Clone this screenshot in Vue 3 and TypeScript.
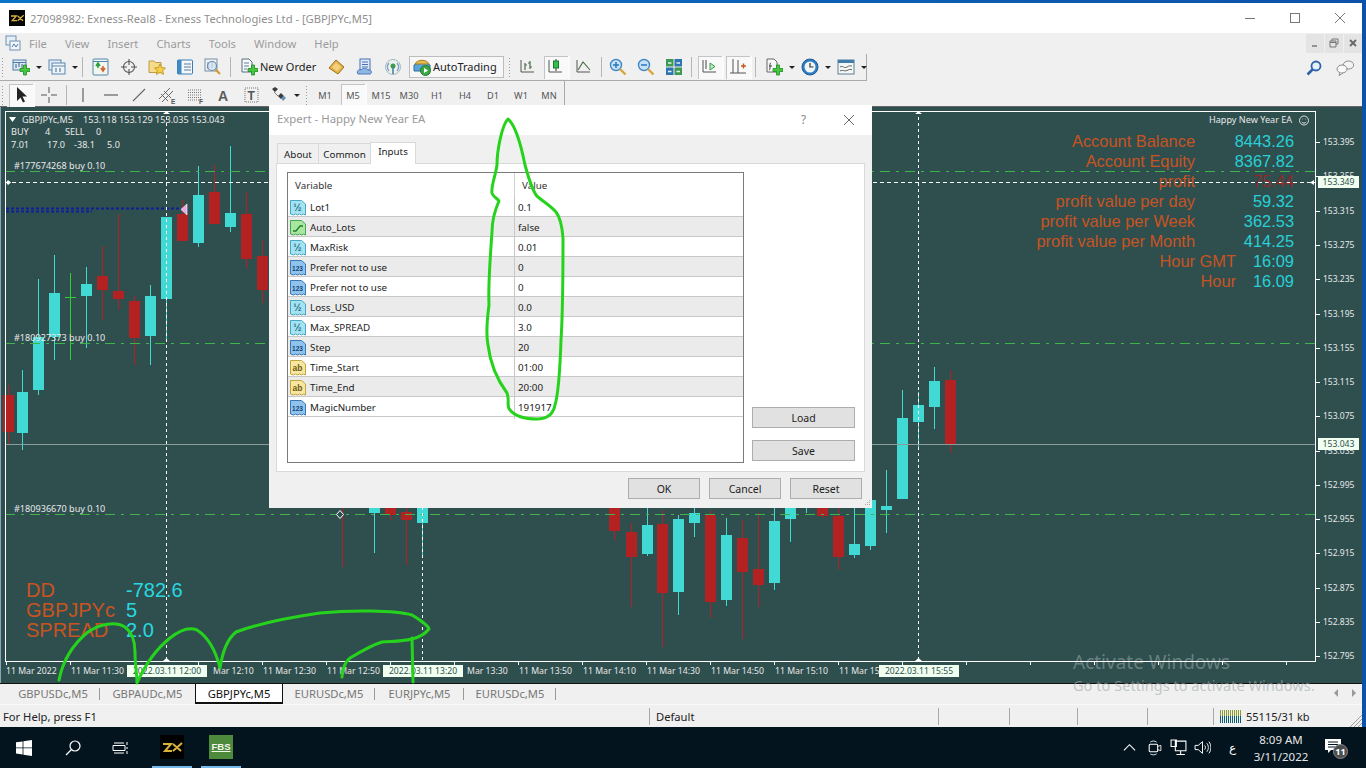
<script setup lang="ts">
const plus = (x = 8, y = 7) =>
  `<path transform="translate(${x} ${y})" d="M3.500 0h3v3.500H10v3H6.500V10h-3V6.500H0v-3h3.500z" fill="#46c83c" stroke="#1e8a28" stroke-width=".8"/>`
const arrowTick = '<path d="M2 2v12h13" fill="none" stroke="#555" stroke-width="1"/>'
const icons: Record<string, string> = {
  newChart: `<rect x="1" y="2" width="13" height="10" fill="#dde9f4" stroke="#4e7aa6"/><path d="M1 4.500h13" stroke="#4e7aa6"/><path d="M4 6v4M7 5v4M10 6v4" stroke="#38618a"/>${plus()}`,
  profiles: `<rect x="1" y="2" width="12" height="10" fill="#e6eef6" stroke="#5d87ad"/><rect x="4" y="5" width="13" height="11" fill="#eef4fa" stroke="#5d87ad"/><path d="M4 8h13" stroke="#5d87ad"/><path d="M8 10v4M12 10v4" stroke="#3d6788"/>`,
  market: `<rect x="1" y="1" width="15" height="16" rx="1" fill="#f3f6ee" stroke="#4f86ad"/><path d="M1 3.500h15" stroke="#4f86ad"/><path d="M6 10V6M4 8l2-3 2 3" fill="none" stroke="#2e9e3a" stroke-width="1.600"/><path d="M11 8v4M9 10l2 3 2-3" fill="none" stroke="#d8632a" stroke-width="1.600"/>`,
  target: `<circle cx="9" cy="9" r="5.500" fill="none" stroke="#555" stroke-width="1.100"/><path d="M9 1v6M9 11v6M1 9h6M11 9h6" stroke="#555" stroke-width="1.100"/>`,
  favorites: `<path d="M1 3h5l1.500 1.500H13v10H1z" fill="#f5dc8a" stroke="#bd9a45"/><path d="M12 6l1.700 3.600 3.800.4-2.800 2.600.8 3.800-3.500-2-3.500 2 .8-3.800L6.500 10l3.800-.4z" fill="#f7cf3e" stroke="#b98a1c" stroke-width=".8"/>`,
  navigator: `<rect x="1.500" y="2" width="15" height="14" rx="1" fill="#f4f8fc" stroke="#3e7cb0"/><rect x="1.500" y="2" width="4" height="14" fill="#3f8ac4"/><path d="M8 6h7M8 9h7M8 12h7" stroke="#5a7d9d"/>`,
  tester: `<rect x="1" y="1" width="12" height="12" fill="#edf2f7" stroke="#7a8da3"/><path d="M4 4v7M8 3v7" stroke="#66839d"/><circle cx="8" cy="8" r="4.500" fill="#cfe3f3" fill-opacity=".7" stroke="#6f8aa5" stroke-width="1.200"/><path d="M11.500 11.500l4.500 4.500" stroke="#d69a2f" stroke-width="2.200"/>`,
  order: `<path d="M2 1h7l3 3v10H2z" fill="#f7f9fb" stroke="#5b6c80"/><path d="M4 5h5M4 8h5M4 11h3" stroke="#5d7f9f"/>${plus()}`,
  gold: `<path d="M1 10l7-8 8 7-6 7z" fill="#e6b34c" stroke="#9a6f1a"/><path d="M4 9l4-4 5 4-4 4z" fill="#f3d27c"/>`,
  data: `<rect x="4" y="1" width="10" height="11" fill="#dfeaf7" stroke="#456fb8"/><path d="M6 4h6M6 6.500h6M6 9h6" stroke="#456fb8"/><path d="M2 16c-2-3 1-5 3-4 1-2 6-2 7 0 3-1 5 3 2 4z" fill="#8db8e4" stroke="#4d7ab8"/>`,
  signal: `<circle cx="9" cy="9" r="7.500" fill="#eef2ec" stroke="#a5b8c4"/><path d="M5 13a6 6 0 0 1 0-8M13 5a6 6 0 0 1 0 8" fill="none" stroke="#7fa0c8" stroke-width="1.500"/><circle cx="9" cy="8" r="2.500" fill="#3f9c4a"/><path d="M9 9v7" stroke="#3f7c9c" stroke-width="1.500"/>`,
  auto: `<path d="M1 7l8-4 8 4v6H1z" fill="#5ba4d8" stroke="#2f6f9f"/><path d="M2 6c2-5 12-5 14 0z" fill="#e5bd52" stroke="#a47e22"/><circle cx="12.500" cy="12.500" r="5" fill="#39a845" stroke="#1f7a2c"/><path d="M11 10l4 2.500-4 2.500z" fill="#fff"/>`,
  bars: `${arrowTick}<path d="M6 5v7M6 7h2M11 3v8M9 5h2M11 9h2" stroke="#4d6b4a" stroke-width="1.200" fill="none"/>`,
  candles: `${arrowTick}<path d="M9 1v12" stroke="#333"/><rect x="6.500" y="3" width="5" height="7" fill="#2fc24a" stroke="#1c7a30"/>`,
  line: `${arrowTick}<path d="M3 12l5-8 7 8" fill="none" stroke="#4d6b4a" stroke-width="1.100"/>`,
  zoomIn: `<circle cx="7" cy="7" r="5.500" fill="#c7e2f7" stroke="#3e87c4" stroke-width="1.400"/><path d="M4 7h6M7 4v6" stroke="#2a76bb" stroke-width="1.500"/><path d="M11 11l5.500 5.500" stroke="#d7a63c" stroke-width="2.400"/>`,
  zoomOut: `<circle cx="7" cy="7" r="5.500" fill="#c7e2f7" stroke="#3e87c4" stroke-width="1.400"/><path d="M4 7h6" stroke="#2a76bb" stroke-width="1.500"/><path d="M11 11l5.500 5.500" stroke="#d7a63c" stroke-width="2.400"/>`,
  tile: `<rect x="1" y="1" width="7.500" height="7.500" fill="#3d9a55"/><rect x="9.500" y="1" width="7.500" height="7.500" fill="#2f74b5"/><rect x="1" y="9.500" width="7.500" height="7.500" fill="#2f74b5"/><rect x="9.500" y="9.500" width="7.500" height="7.500" fill="#3d9a55"/><path d="M3 5h3.500M11.500 5H15M3 13.500h3.500M11.500 13.500H15" stroke="#e9f3ea" stroke-width="1.600"/>`,
  scroll: `${arrowTick}<path d="M5 2v9" stroke="#444"/><path d="M9 5l5 3.500-5 3.500z" fill="#bfe8c5" stroke="#3b9c4a"/>`,
  shift: `<path d="M4 1v14M1 15h16M9 2v13" stroke="#555" fill="none"/><path d="M12 8h5M14.500 5.500v5" stroke="#c65a1e" stroke-width="1.400"/>`,
  indicator: `<path d="M2 1h7l3 3v10H2z" fill="#f5f7f8" stroke="#666"/><path d="M6 5c-1 0-1 1-1 2v3c0 2-1 2-1 2M4 8h3" fill="none" stroke="#444"/>${plus()}`,
  clock: `<circle cx="9" cy="9" r="8" fill="#2d7ec4" stroke="#1e5c96"/><circle cx="9" cy="9" r="5.500" fill="#f2f5f5"/><path d="M9 5v4h3.500" fill="none" stroke="#333" stroke-width="1.200"/>`,
  template: `<rect x="1" y="2" width="16" height="14" fill="#f4f7f5" stroke="#5c7f98"/><rect x="1" y="2" width="16" height="3" fill="#3e7cb0"/><path d="M3 9c3-2 4 2 7 0s3-1 5-1M3 13c3-2 4 1 7-.5s3-1 5-1" fill="none" stroke="#666"/>`,
  search: `<circle cx="11" cy="7" r="4.500" fill="#e6f0fa" stroke="#2f62ad" stroke-width="1.800"/><path d="M8 10l-5.500 5.500" stroke="#2f62ad" stroke-width="2.600"/>`,
  chat: `<ellipse cx="12.500" cy="6" rx="5.200" ry="4" fill="#f4f4f4" stroke="#8a8a8a"/><ellipse cx="6" cy="10" rx="5" ry="4" fill="#f9f9f9" stroke="#8a8a8a"/><path d="M4 13.500l-1 3 4-2.500" fill="#f9f9f9" stroke="#8a8a8a"/>`,
  cursor: `<path d="M5 1v14l3.500-3.500 2.500 5 2-1-2.500-5H15z" fill="#222"/>`,
  cross: `<path d="M9 1v6M9 11v6M1 9h6M11 9h6" stroke="#555"/>`,
  vline: `<path d="M9 2v14" stroke="#555" stroke-width="1.100"/>`,
  hline: `<path d="M2 9h14" stroke="#555" stroke-width="1.100"/>`,
  trend: `<path d="M3 15L15 3" stroke="#666" stroke-width="1.100"/>`,
  channel: `<path d="M1 13L12 2M4 16L15 5M3 8l7 7M6 5l7 7" stroke="#666"/><text x="13" y="18" font-size="6.500" font-family="Liberation Sans" font-weight="700" fill="#555">E</text>`,
  fibo: `<path d="M2 4h13M2 6.500h13M2 9h13M2 11.500h13M2 14h13" stroke="#777" stroke-dasharray="1 1"/><text x="13" y="18" font-size="6.500" font-family="Liberation Sans" font-weight="700" fill="#555">F</text>`,
  letterA: `<text x="4" y="15" font-size="14" font-family="Liberation Sans" font-weight="700" fill="#5b5b5b">A</text>`,
  letterT: `<rect x="3" y="2" width="13" height="14" fill="none" stroke="#777" stroke-dasharray="1 1"/><text x="5.500" y="14" font-size="12" font-family="Liberation Sans" font-weight="700" fill="#555">T</text>`,
  more: `<path d="M2 3l3 3 3-3-3-2zM8 10l3-3 3 3-3 3z" fill="#3b3b3b"/><path d="M4 6l7 7" stroke="#7c7c7c"/><path d="M11 12l3-2 2 2-3 3z" fill="#5f8fb8"/>`,
}

interface Tool { icon?: string; kind?: string; active?: boolean; label?: string }
const toolsTop: Tool[] = [
  { kind: 'grip' }, { kind: 'split', icon: 'newChart' }, { kind: 'split', icon: 'profiles' }, { kind: 'sep' },
  { icon: 'market' }, { icon: 'target' }, { icon: 'favorites' }, { icon: 'navigator' }, { icon: 'tester' }, { kind: 'sep' },
  { kind: 'wide', icon: 'order', label: 'New Order' }, { icon: 'gold' }, { icon: 'data' }, { icon: 'signal' },
  { kind: 'auto', icon: 'auto', label: 'AutoTrading' }, { kind: 'grip2' },
  { icon: 'bars' }, { icon: 'candles', active: true }, { icon: 'line' }, { kind: 'sep5' },
  { icon: 'zoomIn' }, { icon: 'zoomOut' }, { icon: 'tile' }, { kind: 'sep' },
  { icon: 'scroll', active: true }, { icon: 'shift', active: true }, { kind: 'sep' },
  { kind: 'split', icon: 'indicator' }, { kind: 'split', icon: 'clock' }, { kind: 'split', icon: 'template' },
]
const toolsBottom: Tool[] = [
  { kind: 'grip' }, { icon: 'cursor', active: true }, { icon: 'cross' }, { kind: 'sep5' },
  { icon: 'vline' }, { icon: 'hline' }, { icon: 'trend' }, { icon: 'channel' }, { icon: 'fibo' }, { icon: 'letterA' }, { icon: 'letterT' },
  { kind: 'split', icon: 'more' }, { kind: 'grip3' },
]
const periods = ['M1', 'M5', 'M15', 'M30', 'H1', 'H4', 'D1', 'W1', 'MN']
const menus = ['File', 'View', 'Insert', 'Charts', 'Tools', 'Window', 'Help']

const T = '#40d9d3'
const R = '#b22222'
const candles: [number, number, number, number, number, string][] = [
  [8, 395, 432, 385, 445, R], [22, 392, 433, 370, 450, T], [38, 337, 390, 279, 395, T], [54, 293, 337, 255, 360, T],
  [86, 284, 296, 267, 348, T], [102, 276, 290, 246, 320, R], [118, 291, 299, 214, 310, R], [134, 301, 338, 296, 365, R],
  [150, 296, 336, 285, 365, T], [166, 217, 299, 217, 340, T], [182, 214, 241, 200, 241, R], [198, 195, 243, 166, 247, T],
  [214, 192, 224, 165, 224, R], [230, 213, 227, 146, 232, T], [246, 214, 259, 192, 268, R], [262, 256, 290, 240, 303, R],
  [342, 500, 508, 500, 567, R], [374, 500, 513, 500, 553, T], [390, 500, 515, 500, 520, R], [406, 512, 520, 500, 565, R],
  [422, 500, 523, 500, 555, T], [614, 500, 531, 500, 540, R], [631, 532, 557, 523, 607, R], [647, 525, 554, 500, 556, T],
  [662, 524, 593, 510, 647, R], [678, 519, 592, 515, 615, T], [694, 513, 523, 508, 537, T], [710, 515, 602, 510, 618, R],
  [726, 535, 600, 518, 606, T], [742, 538, 572, 520, 639, R], [758, 569, 585, 513, 607, R], [774, 521, 583, 505, 590, T],
  [790, 500, 519, 500, 542, T], [806, 500, 504, 500, 513, T], [822, 500, 516, 500, 518, R], [838, 516, 557, 508, 570, R],
  [854, 544, 555, 508, 558, T], [870, 500, 546, 500, 550, T], [886, 506, 510, 470, 533, T], [902, 418, 499, 390, 499, T],
  [918, 405, 422, 392, 450, T], [934, 381, 407, 367, 429, T], [950, 380, 445, 370, 453, R],
]
const prices: [string, number][] = [
  ['153.395', 142], ['153.355', 176], ['153.315', 211], ['153.275', 245], ['153.235', 279], ['153.195', 314],
  ['153.155', 348], ['153.115', 382], ['153.075', 416], ['153.035', 451], ['152.995', 485], ['152.955', 519],
  ['152.915', 553], ['152.875', 588], ['152.835', 622], ['152.795', 656],
]
const times: [string, number][] = [
  ['11 Mar 2022', 5], ['11 Mar 11:30', 70], ['Mar 12:10', 212], ['11 Mar 12:30', 262], ['11 Mar 12:50', 326],
  ['Mar 13:30', 466], ['11 Mar 13:50', 518], ['11 Mar 14:10', 582], ['11 Mar 14:30', 646], ['11 Mar 14:50', 710],
  ['11 Mar 15:10', 774], ['11 Mar 15', 838],
]
const timeTags: [string, number][] = [['2022.03.11 12:00', 126], ['2022.03.11 13:20', 382], ['2022.03.11 15:55', 878]]
const priceTags: [string, number][] = [['153.349', 181.5], ['153.043', 444]]
const ticksX = Array.from({ length: 21 }, (_, i) => 6 + i * 64)
const small: [string, number, number][] = [
  ['GBPJPYc,M5', 21, 120], ['153.118 153.129 153.035 153.043', 82, 120],
  ['BUY', 10, 132], ['4', 44, 132], ['SELL', 64, 132], ['0', 95, 132],
  ['7.01', 10, 145], ['17.0', 46, 145], ['-38.1', 73, 145], ['5.0', 106, 145],
  ['#177674268 buy 0.10', 13, 166], ['#180927373 buy 0.10', 13, 338], ['#180936670 buy 0.10', 13, 509],
  ['Happy New Year EA', 1208, 120],
]
const stats = [
  { l: 'Account Balance', v: '8443.26' }, { l: 'Account Equity', v: '8367.82' }, { l: 'profit', v: '75.44', dim: true },
  { l: 'profit value per day', v: '59.32' }, { l: 'profit value per Week', v: '362.53' }, { l: 'profit value per Month', v: '414.25' },
  { l: 'Hour GMT', v: '16:09', far: true }, { l: 'Hour', v: '16.09', far: true },
]
const dd = [['DD', '-782.6'], ['GBPJPYc', '5'], ['SPREAD', '2.0']]
const at = (x: number, y: number) => ({ left: `${x}px`, top: `${y - 107}px` })

const rows = [
  ['d', 'Lot1', '0.1'], ['b', 'Auto_Lots', 'false'], ['d', 'MaxRisk', '0.01'], ['i', 'Prefer not to use', '0'],
  ['i', 'Prefer not to use', '0'], ['d', 'Loss_USD', '0.0'], ['d', 'Max_SPREAD', '3.0'], ['i', 'Step', '20'],
  ['s', 'Time_Start', '01:00'], ['s', 'Time_End', '20:00'], ['i', 'MagicNumber', '191917'],
]
const typeIcon: Record<string, [string, string, string, string, number]> = {
  d: ['#a5e3f0', '#4aa5c6', '#1f6f8f', '½', 10],
  b: ['#a9e6a0', '#4aa552', '#1f6f2f', '', 7],
  i: ['#8fc3ec', '#3a78b5', '#123f78', '123', 6.5],
  s: ['#f6e6a0', '#c2a53c', '#6f5a10', 'ab', 8.5],
}
const tabs = [
  { t: 'GBPUSDc,M5', w: 100, cls: 'first' }, { t: 'GBPAUDc,M5', w: 95, cls: 'plain' }, { t: 'GBPJPYc,M5', w: 88, cls: 'active' },
  { t: 'EURUSDc,M5', w: 92, cls: '' }, { t: 'EURJPYc,M5', w: 89, cls: '' }, { t: 'EURUSDc,M5', w: 92, cls: '' },
]
const cells = [
  { t: 'For Help, press F1', w: 650 }, { t: 'Default', w: 289 }, { t: '', w: 71 }, { t: '', w: 68 }, { t: '', w: 70 }, { t: '', w: 66 },
]
const bars = Array.from({ length: 12 }, (_, i) => i)
</script>

<template>
  <div class="screen">
    <header class="titlebar">
      <svg class="logo" viewBox="0 0 24 24"><rect width="24" height="24" fill="#050505" /><path d="M3 9h8l-6 7h7M13 9l8 7M22 8l-9 8" fill="none" stroke="#d9b13b" stroke-width="2" /></svg>
      <span class="title">27098982: Exness-Real8 - Exness Technologies Ltd - [GBPJPYc,M5]</span>
      <div class="winctl">
        <svg viewBox="0 0 12 12"><path d="M1 6.500h10" stroke="#777" /></svg>
        <svg viewBox="0 0 12 12"><rect x="1.500" y="1.500" width="9" height="9" fill="none" stroke="#777" /></svg>
        <svg viewBox="0 0 12 12"><path d="M1 1l10 10M11 1L1 11" stroke="#777" /></svg>
      </div>
    </header>

    <nav class="menubar">
      <svg class="menu-ic" viewBox="0 0 16 16"><rect x="1" y="1" width="10" height="9" fill="#e7eef5" stroke="#6f92b3" /><rect x="5" y="6" width="10" height="9" fill="#f2f6fa" stroke="#6f92b3" /><path d="M7 12l2-3 2 3 2-3" fill="none" stroke="#4f7ca3" /></svg>
      <span v-for="m in menus" :key="m" class="menu">{{ m }}</span>
      <div class="mdi">
        <span><svg viewBox="0 0 10 10"><path d="M2 8h5" stroke="#777" stroke-width="1.500" /></svg></span>
        <span><svg viewBox="0 0 10 10"><path d="M3 3V1h6v5H7M1 3h6v6H1zM1 4.500h6" fill="none" stroke="#777" /></svg></span>
        <span><svg viewBox="0 0 10 10"><path d="M2 2l6 6M8 2l-6 6" stroke="#666" stroke-width="1.800" /></svg></span>
      </div>
    </nav>

    <div class="toolrow">
      <div class="band band-top">
        <template v-for="(t, i) in toolsTop" :key="i">
          <span v-if="t.kind === 'grip'" class="grip" />
          <span v-else-if="t.kind === 'grip2'" class="grip grip2" />
          <span v-else-if="t.kind === 'sep'" class="sep" />
          <span v-else-if="t.kind === 'sep5'" class="sep sep5" />
          <span v-else-if="t.kind === 'split'" class="split">
            <span class="btn"><svg class="ic" viewBox="0 0 18 18" v-html="icons[t.icon!]" /></span><i class="caret" />
          </span>
          <span v-else-if="t.kind === 'wide'" class="wide">
            <svg class="ic" viewBox="0 0 18 18" v-html="icons[t.icon!]" /><b>{{ t.label }}</b>
          </span>
          <span v-else-if="t.kind === 'auto'" class="auto">
            <svg class="ic" viewBox="0 0 18 18" v-html="icons[t.icon!]" /><b>{{ t.label }}</b>
          </span>
          <span v-else class="btn" :class="{ active: t.active }"><svg class="ic" viewBox="0 0 18 18" v-html="icons[t.icon!]" /></span>
        </template>
      </div>
      <div class="tool-right">
        <svg class="ic" viewBox="0 0 18 18" v-html="icons.search" />
        <svg class="ic" viewBox="0 0 18 18" v-html="icons.chat" />
      </div>
    </div>

    <div class="toolrow second">
      <div class="band band-bottom">
        <template v-for="(t, i) in toolsBottom" :key="i">
          <span v-if="t.kind === 'grip'" class="grip" />
          <span v-else-if="t.kind === 'grip3'" class="grip grip3" />
          <span v-else-if="t.kind === 'sep5'" class="sep sep5" />
          <span v-else-if="t.kind === 'split'" class="split">
            <span class="btn"><svg class="ic" viewBox="0 0 18 18" v-html="icons[t.icon!]" /></span><i class="caret" />
          </span>
          <span v-else class="btn" :class="{ active: t.active }"><svg class="ic" viewBox="0 0 18 18" v-html="icons[t.icon!]" /></span>
        </template>
        <span v-for="p in periods" :key="p" class="btn period" :class="{ active: p === 'M5' }">{{ p }}</span>
      </div>
    </div>

    <main class="chart">
      <svg class="plot" viewBox="0 107 1362 576" width="1362" height="576">
        <g v-for="(c, i) in candles" :key="i" :fill="c[5]">
          <rect :x="c[0]" :y="c[3]" width="1" :height="c[4] - c[3]" />
          <rect :x="c[0] - 5" :y="c[1]" width="11" :height="c[2] - c[1]" />
        </g>
        <path d="M70.500 273V360M65 297.500h11" stroke="#32cd32" fill="none" />
        <path d="M5 171.500H1315M5 343.500H1315M5 514.500H1315" stroke="#3db54a" stroke-dasharray="10 6 3 6" fill="none" />
        <path d="M5 182.500H1315" stroke="#fff" stroke-dasharray="4 3" fill="none" />
        <path d="M5 444.500H1315" stroke="#8b9a9a" fill="none" />
        <path d="M6 208.500H180" stroke="#0f1f9c" stroke-width="2" stroke-dasharray="3 2" fill="none" />
        <path d="M6 211.500H92" stroke="#0f1f9c" stroke-width="2" stroke-dasharray="3 2" fill="none" />
        <path d="M187 204v11l-6-5.500z" fill="#e8a8e8" stroke="#fff" stroke-width=".6" />
        <path d="M166.500 111V661M422.500 111V661M918.500 111V661" stroke="#fff" stroke-dasharray="3 3" fill="none" />
        <path d="M163 114l3.500-3 3.500 3zM163 661l3.500-3 3.500 3zM915 114l3.500-3 3.500 3zM915 661l3.500-3 3.500 3zM8 180l3 2.500-3 2.500-2-2.500zM1314 180v5l-4-2.500z" fill="#fff" />
        <path d="M340 510.500l3.500 4-3.500 4-3.500-4z" fill="#2f4f4f" stroke="#fff" />
        <path d="M9 117h7l-3.500 5z" fill="#fff" />
        <rect x="5.500" y="111.500" width="1310" height="550" fill="none" stroke="#fff" />
        <path v-for="x in ticksX" :key="x" :d="`M${x + .5} 661v4`" stroke="#fff" />
        <path v-for="p in prices" :key="p[0]" :d="`M1316 ${p[1] + .5}h4`" stroke="#fff" />
        <circle cx="1304" cy="120.500" r="4.500" fill="none" stroke="#fff" stroke-width=".8" />
        <path d="M1301.800 122c1 1.500 3.400 1.500 4.400 0M1302.500 119h.6M1305 119h.6" fill="none" stroke="#fff" stroke-width=".8" />
      </svg>

      <span v-for="(s, i) in small" :key="i" class="lbl" :style="at(s[1], s[2] - 7)">{{ s[0] }}</span>
      <span v-for="p in prices" :key="p[0]" class="lbl axis" :style="at(1322, p[1] - 7)">{{ p[0] }}</span>
      <span v-for="p in priceTags" :key="p[0]" class="tag price-tag" :style="at(1317, p[1] - 6)">{{ p[0] }}</span>
      <span v-for="t in times" :key="t[0]" class="lbl axis-t" :style="at(t[1], 664)">{{ t[0] }}</span>
      <span v-for="t in timeTags" :key="t[0]" class="tag time-tag" :style="at(t[1], 665)">{{ t[0] }}</span>

      <section class="stats">
        <div v-for="s in stats" :key="s.l" class="stat">
          <span class="s-l" :class="{ far: s.far }">{{ s.l }}</span>
          <span class="s-v" :class="{ dim: s.dim }">{{ s.v }}</span>
        </div>
      </section>
      <section class="dd">
        <template v-for="d in dd" :key="d[0]">
          <span class="dd-l">{{ d[0] }}</span><span class="dd-v">{{ d[1] }}</span>
        </template>
      </section>
    </main>

    <div class="tabs">
      <span v-for="(t, i) in tabs" :key="i" class="tab" :class="t.cls" :style="{ width: t.w + 'px' }">{{ t.t }}</span>
      <div class="tab-arrows"><i class="ta left" /><i class="ta right" /></div>
    </div>

    <footer class="status">
      <span v-for="(c, i) in cells" :key="i" class="cell" :style="{ width: c.w + 'px' }">{{ c.t }}</span>
      <span class="cell conn">
        <span class="conn-bars"><i v-for="b in bars" :key="b" /></span>55115/31 kb
      </span>
      <svg class="resize" viewBox="0 0 14 14"><path d="M14 2L2 14M14 6l-8 8M14 10l-4 4" stroke="#a0a0a0" /></svg>
    </footer>

    <div class="taskbar">
      <svg class="tb-win" viewBox="0 0 16 16"><path d="M0 2.300L6.600 1.400V7.500H0zM7.400 1.300L16 0V7.500H7.400zM0 8.300H6.600V14.500L0 13.600zM7.400 8.300H16V16L7.400 14.700z" fill="#fff" /></svg>
      <svg class="tb-search" viewBox="0 0 16 16"><circle cx="10" cy="6" r="5" fill="none" stroke="#fff" stroke-width="1.200" /><path d="M6.500 9.500L1 15" stroke="#fff" stroke-width="1.300" /></svg>
      <svg class="tb-view" viewBox="0 0 16 16"><path d="M2 3h10M2 13h10M1 5.500h12v5H1zM15 2v3M15 7v2M15 11v3" fill="none" stroke="#fff" /></svg>
      <span class="app">
        <svg class="app-ic" viewBox="0 0 24 24"><rect width="24" height="24" fill="#000" /><path d="M3 9h8l-6 7h7M13 9l8 7M22 8l-9 8" fill="none" stroke="#d9b13b" stroke-width="2" /></svg>
      </span>
      <span class="app">
        <span class="fbs">FBS</span>
      </span>
      <div class="tray">
        <svg class="tray-up" viewBox="0 0 14 14"><path d="M1 10l6-6 6 6" fill="none" stroke="#fff" stroke-width="1.200" /></svg>
        <svg class="tray-ic" viewBox="0 0 16 16"><rect x="3" y="5" width="8" height="7" rx="1" fill="none" stroke="#fff" /><path d="M11 7l3-1v5l-3-1M4 3c2-1.500 4-1.500 6 0M4 14c2 1.200 4 1.200 6 0" fill="none" stroke="#fff" stroke-width=".8" /></svg>
        <svg class="tray-ic" viewBox="0 0 16 16"><path d="M5 2h10v9H5zM1 1h5v6H1zM10 11v3M6 14.500h8" fill="#03141e" stroke="#fff" /></svg>
        <svg class="tray-ic" viewBox="0 0 16 16"><path d="M1 6h3l4-3.500v11L4 10H1zM10 6c1 1 1 3 0 4M12 4c2 2 2 6 0 8M14 2.500c2.500 3 2.500 8 0 11" fill="none" stroke="#fff" stroke-width=".9" /></svg>
        <span class="lang">ع</span>
        <span class="clock"><span>8:09 AM</span><span>3/11/2022</span></span>
        <span class="notif">
          <svg viewBox="0 0 16 16"><path d="M0 1h16v11H6l-3 3v-3H0z" fill="#fff" /><path d="M3 4h10M3 6.500h10M3 9h7" stroke="#03141e" /></svg>
          <b>11</b>
        </span>
      </div>
    </div>

    <section class="dialog">
      <div class="d-title">
        <span>Expert - Happy New Year EA</span>
        <i class="d-q">?</i>
        <svg class="d-x" viewBox="0 0 12 12"><path d="M1 1l10 10M11 1L1 11" stroke="#666" /></svg>
      </div>
      <div class="d-tabs">
        <span class="d-tab tab-a">About</span><span class="d-tab tab-c">Common</span><span class="d-tab on">Inputs</span>
      </div>
      <div class="d-panel">
        <div class="list">
          <div class="l-head"><span>Variable</span><span>Value</span></div>
          <div v-for="(r, i) in rows" :key="i" class="l-row" :class="{ alt: i % 2 === 1 }">
            <span class="l-name">
              <svg class="t-ic" viewBox="0 0 16 16">
                <path d="M.5 .5h11l4 3.500v11l-2-1-2 1-2-1-2 1-2-1-2 1-3-1z" :fill="typeIcon[r[0]][0]" :stroke="typeIcon[r[0]][1]" />
                <path v-if="r[0] === 'b'" d="M3 11h3l4-5h3" fill="none" stroke="#1f7f2f" stroke-width="1.300" />
                <text v-else x="7.500" y="11" text-anchor="middle" font-family="Liberation Sans" font-weight="700" :font-size="typeIcon[r[0]][4]" :fill="typeIcon[r[0]][2]">{{ typeIcon[r[0]][3] }}</text>
              </svg>
              {{ r[1] }}
            </span>
            <span class="l-val">{{ r[2] }}</span>
          </div>
        </div>
        <div class="side">
          <button class="b side-b">Load</button>
          <button class="b side-b">Save</button>
        </div>
      </div>
      <div class="d-foot">
        <button class="b foot-b">OK</button>
        <button class="b foot-b">Cancel</button>
        <button class="b foot-b">Reset</button>
      </div>
      <svg class="d-grip" viewBox="0 0 8 8"><path d="M6 1h1v1H6zM4 3h1v1H4zM6 3h1v1H6zM2 5h1v1H2zM4 5h1v1H4zM6 5h1v1H6z" fill="#aaa" /></svg>
    </section>

    <svg class="ink" viewBox="0 0 1366 768" width="1366" height="768">
      <path d="M508 119C502 125 497 150 497 165C495 178 491 186 492 193C493 197 497 198 499 201C495 210 492 220 492 232C490 260 488 285 489 305C487 320 486 335 488 345C490 362 496 378 507 393C510 401 506 406 510 410C515 416 525 419 537 419C547 419 553 415 555 405C558 395 560 370 561 340C563 310 563 270 563 238C562 225 560 217 556 212C548 203 540 200 536 195C530 185 528 175 525 165C521 145 515 125 508 119Z" />
      <path d="M59 680C63 660 72 645 88 632C100 624 115 621 125 627C133 633 135 642 135 652C135 665 137 675 137 683C145 665 155 650 170 638C180 630 190 627 197 630C208 637 216 652 220 668C222 655 226 640 236 632C255 625 285 618 320 613C350 610 395 610 412 615C420 620 428 625 429 629C425 634 420 637 412 639C400 642 390 641 382 642C372 645 360 652 350 658C345 662 342 670 342 677" />
      <path d="M412 638L413 682" />
    </svg>

    <div class="activate">
      <span class="a1">Activate Windows</span>
      <span class="a2">Go to Settings to activate Windows.</span>
    </div>
  </div>
</template>

<style>
html, body { margin: 0; background: #03141e; overflow: hidden; }
</style>

<style scoped>
.screen {
  position: relative; width: 1366px; height: 768px; overflow: hidden; display: flex; flex-direction: column;
  box-sizing: border-box; padding-top: 3px; padding-right: 4px; background: linear-gradient(90deg, #0b74c9, #0d52a8);
  font-family: "Noto Sans", sans-serif; color: #222;
}
.titlebar { height: 30px; background: #fff; display: flex; align-items: center; flex: none; }
.logo { width: 16px; height: 16px; margin: 0 5px 0 9px; }
.title { font-size: 11.200px; color: #8f8f8f; }
.winctl { margin-left: auto; display: flex; gap: 33px; margin-right: 16px; }
.winctl svg { width: 12px; height: 12px; }
.menubar { height: 20px; background: #f0f0f0; display: flex; align-items: center; flex: none; border-bottom: 1px solid #a6a6a6; padding-left: 5px; padding-bottom: 2px; box-sizing: content-box; margin-bottom: -2px; }
.menu-ic { width: 16px; height: 16px; margin-right: 8px; }
.menu { font-size: 11.200px; color: #9c9c9c; margin-right: 18px; }
.mdi { margin-left: auto; display: flex; gap: 1px; height: 19px; margin-right: 0; }
.mdi span { width: 18px; background: #e4e4e4; display: flex; align-items: center; justify-content: center; }
.mdi svg { width: 10px; height: 10px; }
.toolrow { display: flex; height: 27px; background: #f0f0f0; flex: none; align-items: stretch; }
.second { height: 26px; border-bottom: 1px solid #666; box-sizing: border-box; }
.band { display: flex; align-items: center; box-sizing: border-box; border-right: 1px solid #aaa; }
.band-top { width: 867px; border-bottom: 1px solid #aaa; }
.band-bottom { width: 565px; padding-top: 3px; }
.tool-right { margin-left: auto; display: flex; gap: 13px; align-items: center; padding-right: 8px; }
.grip { width: 7px; height: 20px; flex: none; background: radial-gradient(circle, #999 .6px, transparent .9px) 1px 0/3px 3px; background-clip: content-box; box-sizing: border-box; padding-right: 2px; }
.grip2 { width: 10px; margin-left: 0; padding: 0 3px 0 3px; }
.grip3 { width: 10px; padding: 0 2px 0 3px; }
.sep { width: 8px; height: 20px; flex: none; position: relative; }
.sep::after { content: ""; position: absolute; left: 3px; top: 0; bottom: 0; width: 1px; background: #b5b5b5; }
.sep5 { width: 6px; }
.btn { width: 28px; height: 25px; flex: none; display: flex; align-items: center; justify-content: center; box-sizing: border-box; }
.btn.active { background: #f9f9f9; box-shadow: inset 1px 1px 0 #c4c4c4; border: 1px solid #f0f0f0; border-right: 2px solid #fbfbfb; border-left: 2px solid #f0f0f0; }
.ic { width: 18px; height: 18px; flex: none; }
.split { width: 36px; display: flex; align-items: center; flex: none; }
.caret { width: 0; height: 0; border: 3px solid transparent; border-top: 3px solid #222; border-bottom: 0; margin-left: 1px; }
.wide { width: 88px; flex: none; display: flex; align-items: center; gap: 2px; padding-left: 5px; box-sizing: border-box; }
.wide b, .auto b { font-weight: 400; font-size: 11px; color: #222; white-space: nowrap; margin-top: -2px; }
.auto { width: 95px; height: 22px; margin-left: 2px; flex: none; display: flex; align-items: center; gap: 2px; padding-left: 3px; box-sizing: border-box; border: 1px solid #bdbdbd; background: #f7f7f7; }
.period { font-size: 9.200px; color: #555; }
.chart { position: relative; height: 576px; flex: none; background: #2f4f4f; border-left: 1px solid #8ba5bd; box-sizing: border-box; margin-bottom: 0; }
.plot { position: absolute; left: -1px; top: 0; display: block; }
.lbl { position: absolute; font-size: 9.100px; line-height: 14px; color: #e8e8e8; white-space: nowrap; }
.axis { font-size: 8.500px; }
.axis-t { font-size: 8.700px; }
.tag { position: absolute; font-size: 8.600px; line-height: 12px; height: 12px; background: #f0fff0; color: #2f4f4f; white-space: nowrap; text-align: center; }
.price-tag { width: 41px; }
.time-tag { width: 80px; }
.stats { position: absolute; left: 1029px; top: 24px; width: 264px; font-family: "Liberation Sans", sans-serif; font-size: 16.400px; }
.stat { height: 20px; line-height: 20px; display: grid; grid-template-columns: 165px 99px; }
.s-l { color: #c9531f; text-align: right; white-space: nowrap; }
.s-l.far { margin-right: -41px; }
.s-v { color: #28cfd6; text-align: right; }
.s-v.dim { color: #8f2a2a; }
.dd { position: absolute; left: 25px; top: 473px; display: grid; grid-template-columns: 100px auto; font-family: "Liberation Sans", sans-serif; font-size: 20px; line-height: 20px; }
.dd-l { color: #c9531f; }
.dd-v { color: #28d8e0; }
.tabs { height: 21px; flex: none; display: flex; background: #f0f0f0; border-top: 1px solid #111; box-sizing: border-box; position: relative; }
.tab { height: 19px; display: flex; align-items: center; justify-content: center; font-size: 11.200px; color: #777; box-sizing: border-box; position: relative; }
.tab::after { content: ""; position: absolute; right: 0; top: 4px; bottom: 3px; width: 1px; background: #999; }
.tab.plain::after, .tab.active::after { display: none; }
.tab.first { padding-left: 6px; }
.tab.active { background: #fff; color: #111; border: 1px solid #111; border-top: 0; border-bottom-width: 2px; height: 20px; }
.tab-arrows { position: absolute; right: 6px; top: 5px; display: flex; gap: 14px; }
.ta { width: 0; height: 0; border: 4px solid transparent; }
.ta.left { border-right-color: #999; border-left: 0; }
.ta.right { border-left-color: #999; border-right: 0; }
.status { height: 23px; flex: none; display: flex; align-items: center; background: #f0f0f0; border-top: 1px solid #fafafa; box-sizing: border-box; position: relative; }
.cell { height: 17px; line-height: 17px; font-size: 11.200px; color: #222; box-sizing: border-box; padding-left: 6px; border-right: 1px solid #a8a8a8; flex: none; white-space: nowrap; }
.cell:first-child { padding-left: 3px; }
.conn { border-right: 0; display: flex; align-items: center; gap: 4px; font-size: 11px; padding-left: 5px; }
.conn-bars { width: 23px; height: 13px; display: flex; gap: 1px; background: linear-gradient(#8e9a30 50%, #0f5c6f 50%); }
.conn-bars i { width: 1px; background: #f0f0f0; }
.resize { position: absolute; right: 0; bottom: 0; width: 14px; height: 14px; }
.taskbar { height: 41px; margin-right: -4px; flex: none; background: #03141e; display: flex; align-items: center; position: relative; }
.tb-win { width: 16px; height: 16px; margin-left: 16px; }
.tb-search { width: 16px; height: 16px; margin-left: 33px; }
.tb-view { width: 16px; height: 16px; margin-left: 31px; }
.app { width: 40px; height: 41px; margin-left: 24px; display: flex; align-items: center; justify-content: center; border-bottom: 2px solid #76b9ed; box-sizing: border-box; }
.app + .app { margin-left: 9px; }
.app-ic { width: 24px; height: 24px; }
.fbs { width: 24px; height: 24px; background: #4d8a3c; color: #f3f7ee; font: 700 9.500px/24px "Liberation Sans", sans-serif; text-align: center; text-decoration: underline; }
.tray { margin-left: auto; display: flex; align-items: center; color: #fff; }
.tray-up { width: 13px; height: 13px; margin-right: 3px; }
.tray-ic { width: 17px; height: 17px; margin-left: 7px; }
.lang { font-size: 12px; width: 16px; text-align: center; margin-left: 13px; }
.clock { width: 70px; margin-left: 6px; display: flex; flex-direction: column; align-items: center; font-size: 11.500px; line-height: 17px; color: #e6e6e6; }
.notif { position: relative; width: 24px; height: 24px; margin: 0 17px 0 9px; }
.notif svg { width: 16px; height: 16px; position: absolute; left: 0; top: 2px; }
.notif b { position: absolute; left: 8px; top: 8px; width: 15px; height: 15px; border-radius: 50%; background: #4a4f52; border: 1px solid #888; box-sizing: border-box; font-size: 9px; line-height: 13px; text-align: center; color: #fff; font-weight: 700; }
.dialog { position: absolute; left: 269px; top: 105px; width: 603px; height: 403px; background: #f0f0f0; box-sizing: border-box; display: flex; flex-direction: column; }
.d-title { height: 30px; flex: none; background: #fff; display: flex; align-items: center; padding: 0 0 3px 8px; box-sizing: border-box; font-size: 11.400px; color: #9a9a9a; position: relative; }
.d-q { position: absolute; left: 532px; top: 6px; font-style: normal; color: #888; font-size: 12px; }
.d-x { position: absolute; left: 574px; top: 9px; width: 12px; height: 12px; }
.d-tabs { height: 28px; display: flex; align-items: flex-end; padding-left: 8px; flex: none; }
.d-tab { height: 20px; line-height: 21px; font-size: 9.800px; text-align: center; background: #f0f0f0; border: 1px solid #d9d9d9; border-bottom: 0; box-sizing: border-box; color: #222; margin-right: -1px; }
.tab-a { width: 42px; }
.tab-c { width: 53px; }
.d-tab.on { background: #fff; width: 46px; height: 22px; margin-bottom: -1px; position: relative; line-height: 18px; }
.d-panel { margin: 0 7px; height: 309px; background: #fff; border: 1px solid #d9d9d9; box-sizing: border-box; display: flex; padding: 8px 10px; flex: none; }
.list { width: 457px; height: 291px; border: 1px solid #7a7a7a; box-sizing: border-box; font-size: 9.800px; flex: none; }
.l-head { height: 24px; display: grid; grid-template-columns: 226px 1fr; align-items: center; color: #333; }
.l-head span { padding-left: 7px; height: 100%; line-height: 25px; }
.l-head span + span { border-left: 1px solid #d0d0d0; }
.l-row { height: 20px; display: grid; grid-template-columns: 226px 1fr; align-items: center; border-bottom: 1px solid #c8c8c8; box-sizing: border-box; }
.l-row.alt { background: #ebebeb; }
.l-name { display: flex; align-items: center; gap: 4px; padding-left: 2px; line-height: 22px; }
.t-ic { width: 16px; height: 16px; flex: none; }
.l-val { border-left: 1px solid #c8c8c8; padding-left: 3px; height: 100%; line-height: 22px; box-sizing: border-box; }
.side { margin-left: 8px; display: flex; flex-direction: column; justify-content: flex-end; gap: 12px; padding-bottom: 2px; }
.b { font-family: inherit; font-size: 10.500px; color: #222; background: #e1e1e1; border: 1px solid #adadad; padding: 0; }
.side-b { width: 103px; height: 21px; }
.d-foot { display: flex; justify-content: flex-end; gap: 9px; padding: 6px 10px 0 0; }
.foot-b { width: 72px; height: 21px; }
.d-grip { position: absolute; right: 1px; bottom: 1px; width: 8px; height: 8px; }
.ink { position: absolute; left: 0; top: 0; pointer-events: none; fill: none; stroke: #26d31c; stroke-width: 3; stroke-linecap: round; stroke-linejoin: round; }
.activate { position: absolute; left: 1073px; top: 650px; display: flex; flex-direction: column; pointer-events: none; color: rgba(255, 255, 255, .28); white-space: nowrap; }
.a1 { font-size: 19px; line-height: 24px; }
.a2 { font-size: 14.600px; line-height: 22px; color: rgba(160, 170, 170, .6); }
</style>
